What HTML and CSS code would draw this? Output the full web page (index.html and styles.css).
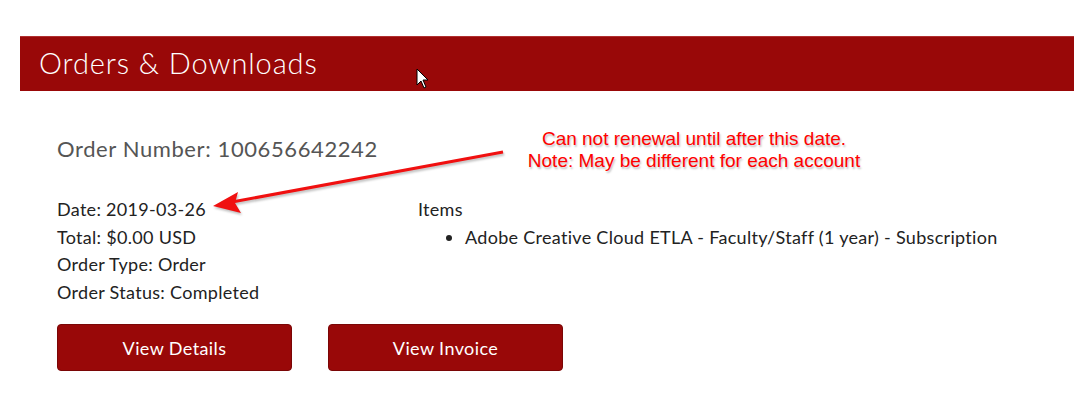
FILE: index.html
```html
<!DOCTYPE html>
<html>
<head>
  <title>Orders &amp; Downloads</title>
  <link rel="stylesheet" href="styles.css">
</head>
<body>

<div class="banner">
  <h1>Orders &amp; Downloads</h1>
  <!-- mouse pointer caught in the screenshot -->
  <svg class="cursor" width="14" height="22" viewBox="0 0 14 22">
    <path d="M1 1 L1 17 L5 13 L8 20 L10 19 L7 12 L12 12 Z" fill="#fff" stroke="#000" stroke-width="1"/>
  </svg>
</div>

<div class="order">
  <h2>Order Number: 100656642242</h2>

  <div class="info">
    <div class="facts">
      <div>Date: 2019-03-26</div>
      <div>Total: $0.00 USD</div>
      <div>Order Type: Order</div>
      <div>Order Status: Completed</div>
    </div>
    <div class="items">
      <div>Items</div>
      <ul>
        <li>Adobe Creative Cloud ETLA - Faculty/Staff (1 year) - Subscription</li>
      </ul>
    </div>
  </div>

  <div class="buttons">
    <button>View Details</button>
    <button>View Invoice</button>
  </div>

  <!-- annotation added over the screenshot -->
  <div class="note">
    Can not renewal until after this date.<br>
    Note: May be different for each account
  </div>
  <svg class="arrow" width="320" height="80" viewBox="0 0 320 80">
    <line x1="303" y1="9" x2="32" y2="59" stroke="#f01010" stroke-width="3"/>
    <path d="M13 63 L38 49 L35 60 L41 70 Z" fill="#f01010"/>
  </svg>
</div>

</body>
</html>
```

FILE: styles.css
```css
body {
  margin: 0;
  background: #fff;
  font-family: "Lato", "Open Sans", sans-serif;
  color: #222;
}
.banner {
  position: relative;
  margin: 36px 0 0 20px;
  height: 55px;
  background-color: #990808;
  border-top: 1px solid #b03030;
  box-sizing: border-box;
}
.banner h1 {
  margin: 0;
  padding: 8px 0 0 19px;
  font-size: 29px;
  font-weight: 300;
  color: #fff;
  letter-spacing: 0.9px;
}
.cursor {
  position: absolute;
  left: 396px;
  top: 31px;
}
.order {
  position: relative;
  padding: 0 0 0 57px;
}
.order h2 {
  margin: 0;
  padding-top: 44px;
  font-size: 22px;
  font-weight: 400;
  color: #555;
  letter-spacing: 0.6px;
}
.info {
  display: flex;
  margin-top: 34px;
  font-size: 18px;
  line-height: 27.5px;
  letter-spacing: 0.3px;
}
.facts {
  width: 361px;
}
.items ul {
  margin: 0;
  padding-left: 47px;
}
.buttons {
  display: flex;
  gap: 36px;
  margin-top: 18px;
}
.buttons button {
  width: 235px;
  height: 47px;
  background-color: #990808;
  color: #fff;
  border: 1px solid #7a0606;
  border-radius: 4px;
  font-family: "Lato", "Open Sans", sans-serif;
  font-size: 18px;
  letter-spacing: 0.4px;
}
.note {
  position: absolute;
  left: 494px;
  top: 37px;
  width: 400px;
  text-align: center;
  font-family: "Liberation Sans", Arial, sans-serif;
  font-size: 19px;
  line-height: 22px;
  color: #f00;
  text-shadow: 1px 2px 2px rgba(0, 0, 0, 0.25);
}
.arrow {
  position: absolute;
  left: 200px;
  top: 52px;
  filter: drop-shadow(1px 2px 1px rgba(0, 0, 0, 0.25));
}
```
